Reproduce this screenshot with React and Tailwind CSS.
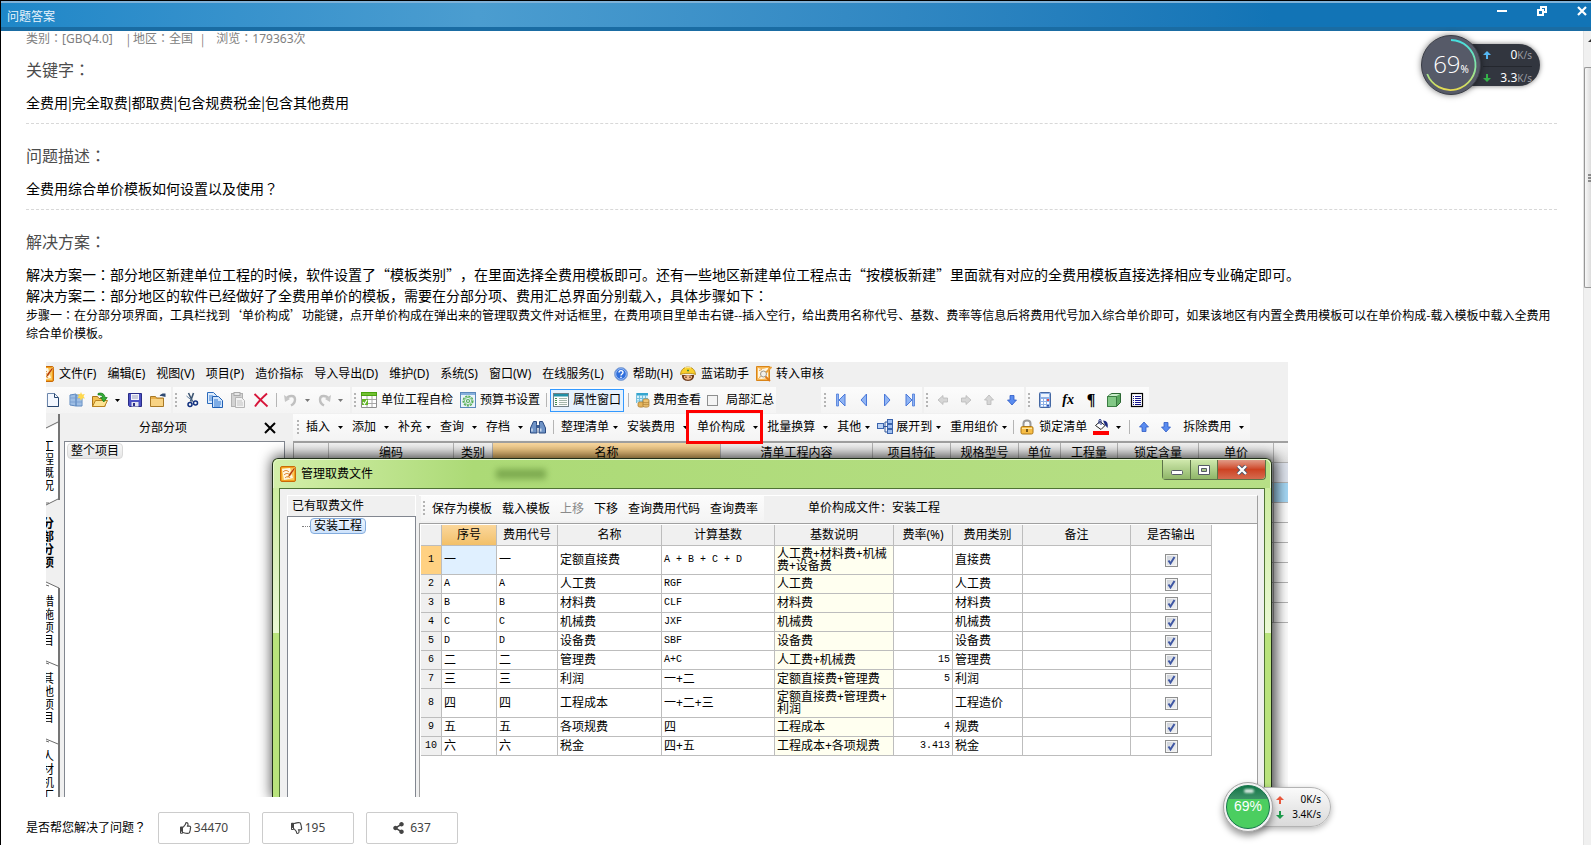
import React from "react";
import { FaRegThumbsUp, FaRegThumbsDown, FaShareAlt } from "react-icons/fa";

const menu = [
  "文件(F)",
  "编辑(E)",
  "视图(V)",
  "项目(P)",
  "造价指标",
  "导入导出(D)",
  "维护(D)",
  "系统(S)",
  "窗口(W)",
  "在线服务(L)",
];

const gridColumns = [
  { name: "", width: "w-[35px]" },
  { name: "编码", width: "w-[125px]" },
  { name: "类别", width: "w-[39px]" },
  { name: "名称", width: "w-[228px]", active: true },
  { name: "清单工程内容", width: "w-[152px]" },
  { name: "项目特征", width: "w-[78px]" },
  { name: "规格型号", width: "w-[68px]" },
  { name: "单位", width: "w-[42px]" },
  { name: "工程量", width: "w-[57px]" },
  { name: "锁定含量", width: "w-[81px]" },
  { name: "单价", width: "w-[75px]" },
  { name: "", width: "w-[15px]" },
];

const gridRows = ["bg-[#dfe4ee]", "bg-[#a6d8f6]", "bg-white", "bg-white", "bg-white", "bg-white", "bg-white", "bg-white"];

const feeColumns = [
  { name: "", width: "w-[21px]" },
  { name: "序号", width: "w-[55px]" },
  { name: "费用代号", width: "w-[61px]" },
  { name: "名称", width: "w-[104px]" },
  { name: "计算基数", width: "w-[113px]" },
  { name: "基数说明", width: "w-[119px]" },
  { name: "费率(%)", width: "w-[59px]" },
  { name: "费用类别", width: "w-[70px]" },
  { name: "备注", width: "w-[108px]" },
  { name: "是否输出", width: "w-[81px]" },
];

const fees = [
  { no: "一", name: "定额直接费", base: "A + B + C + D", note: "人工费+材料费+机械费+设备费", rate: "", type: "直接费", tall: true },
  { no: "A", name: "人工费", base: "RGF", note: "人工费", rate: "", type: "人工费" },
  { no: "B", name: "材料费", base: "CLF", note: "材料费", rate: "", type: "材料费" },
  { no: "C", name: "机械费", base: "JXF", note: "机械费", rate: "", type: "机械费" },
  { no: "D", name: "设备费", base: "SBF", note: "设备费", rate: "", type: "设备费" },
  { no: "二", name: "管理费", base: "A+C", note: "人工费+机械费", rate: "15", type: "管理费" },
  { no: "三", name: "利润", base: "一+二", note: "定额直接费+管理费", rate: "5", type: "利润" },
  { no: "四", name: "工程成本", base: "一+二+三", note: "定额直接费+管理费+利润", rate: "", type: "工程造价", tall: true },
  { no: "五", name: "各项规费", base: "四", note: "工程成本", rate: "4", type: "规费" },
  { no: "六", name: "税金", base: "四+五", note: "工程成本+各项规费", rate: "3.413", type: "税金" },
];

const sideTabs = [
  { name: "工程概况", height: "h-[89px] pt-[26px]" },
  { name: "分部分项", height: "h-[82px] pt-[14px] font-bold" },
  { name: "措施项目", height: "h-[78px] pt-[10px]" },
  { name: "其他项目", height: "h-[78px] pt-[9px]" },
  { name: "人材机汇", height: "h-[78px] pt-[9px]" },
];

const Svg = ({ className = "w-4 h-4", box = "0 0 16 16", children }) => (
  <svg className={`shrink-0 ${className}`} viewBox={box} fill="none" aria-hidden="true">
    {children}
  </svg>
);

// colon and question mark centred in their full-width box
const Mark = ({ children }) => (
  <span lang="ja" className="font-['Noto_Sans_CJK_JP',sans-serif] leading-none">
    {children}
  </span>
);

/* ---------- toolbar icons ---------- */

const AppIcon = ({ className }) => (
  <Svg className={className}>
    <rect x="0.5" y="0.5" width="15" height="15" rx="1.5" fill="#f2a01e" stroke="#c96a08" />
    <path d="M2 2h12v12H2z" fill="#f9c65a" />
    <path d="M2 3l8-1 3 10-9 2z" fill="#fff6e2" />
    <path d="M3 6c2-2 4-2 6 0M4 9c2-2 4-2 6 0M5 12c2-2 4-2 5 0" stroke="#d8791c" />
    <path d="M14.500 1L9 8l-1.500 4 3-2.500L15 3z" fill="#b3320c" stroke="#fbd46a" strokeWidth="0.6" />
  </Svg>
);

const NewIcon = () => (
  <Svg>
    <path d="M1.500 1.500h7l4 4v9h-11z" fill="#f4f8ff" stroke="#6c87ad" />
    <path d="M8.500 1.500v4h4M12.500 6v8.500h-11" stroke="#28466f" />
  </Svg>
);

const NewProjectIcon = () => (
  <Svg>
    <path d="M1 3l6-1v12l-6-1zM7 3h6v11H7z" fill="#b9d4f1" stroke="#5d88bf" />
    <path d="M3 3v10M5 3v10M9 4v10M11 4v10M1 6h12M1 10h12" stroke="#6e97cb" strokeWidth="0.7" />
    <path d="M12 0l1 2.500L15.800 2 14.500 4.200 16 6.500l-2.600-.2L12 8.500l-1-2.300-2.500.1L9.800 4 8.500 2l2.500.4z" fill="#ffd84c" />
  </Svg>
);

const OpenIcon = () => (
  <Svg>
    <path d="M.5 14.500v-10h5l1.500 2h6v8z" fill="#f3c04f" stroke="#a9751a" />
    <path d="M.5 14.500l3-6h12l-3 6z" fill="#fde391" stroke="#b98220" />
    <path d="M6 1.500c4-1.500 7 1 7 4h2.200L11.800 10 8.500 5.500h2C10.500 4 9 2.500 6 3z" fill="#33ad35" stroke="#147418" strokeWidth="0.7" />
  </Svg>
);

const SaveIcon = () => (
  <Svg>
    <path d="M1.500 1.500h13v13h-12l-1-1z" fill="#4b50c4" stroke="#2a2d86" />
    <path d="M4 2h8v6H4z" fill="#f3f4fb" />
    <path d="M5 4h6M5 6h6" stroke="#9da0bd" />
    <path d="M4.500 10h7v4.500h-7z" fill="#e4e4ef" />
    <path d="M6 11h2v3H6z" fill="#2a2d86" />
  </Svg>
);

const FolderIcon = () => (
  <Svg>
    <path d="M.5 14.500v-10h5l1 1.500h7v8.500z" fill="#e9b04a" stroke="#a87926" />
    <path d="M1 7h12v7H1z" fill="#f8d384" />
    <path d="M9.500 3.500l3-2h3V5z" fill="#2f4a73" />
    <path d="M10 3.500l4-1" stroke="#2f4a73" />
  </Svg>
);

const CutIcon = () => (
  <Svg>
    <path d="M4.500 1l4 8.500M9.500 1l-3 8.500" stroke="#3d5572" strokeWidth="1.600" />
    <path d="M2.500 4l6 5" stroke="#64809f" />
    <circle cx="6" cy="12.500" r="2" stroke="#102f7e" strokeWidth="1.500" />
    <circle cx="11.500" cy="11" r="2" stroke="#102f7e" strokeWidth="1.500" />
  </Svg>
);

const CopyIcon = () => (
  <Svg>
    <path d="M.5.5h6l3 3v8h-9z" fill="#dcebfc" stroke="#2d6cbd" />
    <path d="M2 4h4M2 6h5M2 8h5" stroke="#3f82d4" />
    <path d="M5.500 4.500h6l4 4v7h-10z" fill="#cfe4fc" stroke="#1f5fb4" />
    <path d="M7 8h4M7 10h7M7 12h7M7 14h6" stroke="#2f76cf" />
  </Svg>
);

const PasteIcon = () => (
  <Svg>
    <rect x="1.500" y="1.500" width="11" height="13" fill="#d3d3d3" stroke="#b1b1b1" />
    <rect x="4" y="0.500" width="6" height="3" fill="#e6e6e6" stroke="#a9a9a9" />
    <path d="M5.500 5.500h6l3 3v7h-9z" fill="#f2f2f2" stroke="#b5b5b5" />
    <path d="M7 9h5M7 11h6M7 13h6" stroke="#c3c3c3" />
  </Svg>
);

const DeleteIcon = () => (
  <Svg>
    <path d="M1.500 2c3 3 8 8 13 12.500M14 1.500C9 6 5 10 2 14.500" stroke="#d7153a" strokeWidth="1.900" />
  </Svg>
);

const UndoIcon = ({ className = "" }) => (
  <Svg className={`w-3.5 h-3.5 ${className}`} box="0 0 14 14">
    <path d="M2 6c3-4 9-4 9 .5 0 3-2 5-4 6" stroke="#c0c0c0" strokeWidth="2.400" />
    <path d="M0 2l1 7 5-3z" fill="#c6c6c6" />
  </Svg>
);

const CheckSheetIcon = () => (
  <Svg>
    <path d="M.5.500h15v15H.5z" fill="#fff" stroke="#8e8e8e" />
    <path d="M0 0h16v4H0z" fill="#4aa30f" />
    <path d="M1 2h14" stroke="#9bdc5a" />
    <path d="M1 7.500h14M1 11.500h14M6 4v11M11 4v11" stroke="#a8a8a8" />
    <path d="M1 7h6v6H1z" fill="#64b52a" />
    <path d="M2 10l1.500 2L6 8" stroke="#fff" strokeWidth="1.200" />
  </Svg>
);

const GearSheetIcon = () => (
  <Svg>
    <rect x="0.500" y="0.500" width="15" height="15" fill="#eaf3fb" stroke="#5b89bb" />
    <path d="M1 1h14v2H1z" fill="#86b0dc" />
    <circle cx="8" cy="9" r="4.800" stroke="#58ae58" strokeWidth="1.500" strokeDasharray="2.200 1" />
    <circle cx="8" cy="9" r="3.600" stroke="#7cc47c" strokeWidth="1" />
    <circle cx="8" cy="9" r="1.500" stroke="#58ae58" strokeWidth="1.200" />
  </Svg>
);

const PropertyIcon = () => (
  <Svg>
    <rect x="0.500" y="1.500" width="15" height="13" fill="#fbfdfb" stroke="#6f7f86" />
    <path d="M1 2h14v2.500H1z" fill="#1f8fa6" />
    <path d="M2 6.500h2M2 8.500h2M2 10.500h2M2 12.500h2" stroke="#3f8b4d" />
    <path d="M6 6.500h8M6 8.500h8M6 10.500h8M6 12.500h8" stroke="#a3b5aa" />
  </Svg>
);

const CostViewIcon = () => (
  <Svg>
    <path d="M1 1h12v10H1z" fill="#d6effa" />
    <path d="M1 1h12v2.500H1z" fill="#36a6cf" />
    <path d="M1.500 1v10M4.500 3v8M7.500 3v8M10.500 3v8M1 6.500h12M1 9h12" stroke="#74c0dd" />
    <path d="M3 11c0-1.500 6-1.500 6 0v3c0 1.500-6 1.500-6 0z" fill="#e4b45c" stroke="#a5762a" strokeWidth="0.700" />
    <path d="M8 8c0-1.500 6-1.500 6 0v6c0 1.500-6 1.500-6 0z" fill="#edc373" stroke="#a5762a" strokeWidth="0.700" />
    <path d="M8 10c1 1 5 1 6 0M8 12c1 1 5 1 6 0" stroke="#a5762a" strokeWidth="0.700" />
  </Svg>
);

const NavIcon = ({ dir, end }) => (
  <Svg className={dir === "left" ? "w-4 h-4" : "w-4 h-4 rotate-180"}>
    <path d={end ? "M12 2v12L6 8z" : "M10.500 2v12L5 8z"} fill="#8fb4f4" stroke="#4a78d8" />
    {end && <path d="M3.500 2v12h2V2z" fill="#8fb4f4" stroke="#4a78d8" strokeWidth="0.800" />}
  </Svg>
);

const ArrowIcon = ({ turn = "", blue }) => (
  <Svg className={`w-4 h-4 ${turn}`}>
    <path
      d="M8 3l4.500 5H10v4.500H6V8H3.500z"
      fill={blue ? "#5a8cf0" : "#d6d6d6"}
      stroke={blue ? "#2f5bc4" : "#b9b9b9"}
      strokeWidth="0.800"
    />
  </Svg>
);

const CalculatorIcon = () => (
  <Svg>
    <rect x="2.500" y="0.500" width="11" height="15" rx="1" fill="#8fb1e6" stroke="#4568a3" />
    <path d="M4 2h8v3H4z" fill="#eef5fd" />
    <path d="M4 7h2v2H4zM7 7h2v2H7zM4 10h2v2H4zM7 10h2v2H7zM10 10h2v2h-2zM4 13h2v1.500H4zM7 13h2v1.500H7z" fill="#fff" />
    <path d="M10 7h2v2h-2z" fill="#e04848" />
    <path d="M10 13h2v1.500h-2z" fill="#2c4fae" />
  </Svg>
);

const CubeIcon = () => (
  <Svg>
    <path d="M1.500 4.500l4-3h9v9l-4 4h-9z" fill="#5aa85f" stroke="#2c6733" />
    <path d="M1.500 4.500h9v10h-9z" fill="#82c886" stroke="#3b7d42" />
    <path d="M2 4l4-2h8l-3.500 2z" fill="#c9ecca" />
  </Svg>
);

const ListIcon = () => (
  <Svg>
    <rect x="2.500" y="1.500" width="11" height="13" fill="#fff" stroke="#000" strokeWidth="1.200" />
    <path d="M4 4.500h1M4 6.500h1M4 8.500h1M4 10.500h1M4 12.500h1M6 4.500h6M6 6.500h6M6 8.500h6M6 10.500h6M6 12.500h6" stroke="#16168c" />
  </Svg>
);

const HelpIcon = () => (
  <Svg className="w-3.5 h-3.5 ml-[10px]" box="0 0 14 14">
    <circle cx="7" cy="7" r="6.500" fill="#2f6fdc" stroke="#8fa9d3" />
    <circle cx="7" cy="7" r="5.300" stroke="#cfe0fa" strokeWidth="0.700" />
    <path d="M5 5.500c0-2.500 4-2.500 4 0C9 7 7 7 7 8.500M7 9.800v1.300" stroke="#fff" strokeWidth="1.400" />
  </Svg>
);

const HelmetIcon = () => (
  <Svg className="w-4 h-4 ml-[7px]">
    <path d="M2 9h12c1 8-13 8-12 0z" fill="#6b3717" />
    <path d="M4 10c2-1 6-1 8 0 1 5-9 5-8 0z" fill="#f3bb8c" />
    <path d="M.5 8.500C1-1.500 15-1.500 15.500 8.500c-3-1.500-12-1.500-15 0z" fill="#f9cf2c" stroke="#a77a0b" strokeWidth="0.700" />
    <path d="M5 2c2-1 4-1 6 0" stroke="#fff1a4" />
    <path d="M7 4.500h2" stroke="#3f8b3a" strokeWidth="1.500" />
    <path d="M6 10.500V12M10 10.500V12" stroke="#331505" />
  </Svg>
);

const AuditIcon = () => (
  <Svg className="w-4 h-4 ml-[7px]">
    <path d="M.5.500h13v14H.5z" fill="#f7b552" stroke="#d98519" />
    <path d="M2 2c4 2 6 0 10 0v10c-4 0-6 2-10 0z" fill="#fff6e2" />
    <circle cx="7.500" cy="8" r="3" fill="#f2f0ea" stroke="#9a9488" />
    <path d="M9.500 10.500L14 15" stroke="#e07a17" strokeWidth="1.800" />
    <path d="M15.500 1L10 6.500" stroke="#e9a03a" strokeWidth="1.800" />
    <path d="M3 4.500l3-1M3 11.500l2-1" stroke="#e0a04c" />
  </Svg>
);

const BinocularsIcon = () => (
  <Svg>
    <path d="M3.500 2.500h3v3l.5 8.500H.5V9zM9.500 2.500h3l3 6.500v5H9l.5-8.500z" fill="#6f93c6" stroke="#2b4a80" />
    <path d="M6.500 6h3v3h-3z" fill="#3b5c93" />
    <path d="M2 9.500v3M10.800 9.500v3" stroke="#e3edf9" strokeWidth="1.200" />
  </Svg>
);

const ExpandIcon = () => (
  <Svg>
    <path d="M6 7.500h4M8 3v10M8 3h2M8 13h2" stroke="#31569b" />
    <rect x="0.500" y="4.500" width="6" height="5" fill="#bcd3f5" stroke="#3b64ad" />
    <rect x="10.500" y="0.500" width="5" height="4" fill="#9fbff0" stroke="#3b64ad" />
    <rect x="10.500" y="5.500" width="5" height="4" fill="#9fbff0" stroke="#3b64ad" />
    <rect x="10.500" y="10.500" width="5" height="4" fill="#9fbff0" stroke="#3b64ad" />
  </Svg>
);

const LockIcon = () => (
  <Svg className="w-3.5 h-4" box="0 0 14 16">
    <path d="M3.500 8V4.500c0-4 7-4 7 0V8" stroke="#9a9a9a" strokeWidth="2" />
    <rect x="1" y="7.500" width="12" height="7.500" rx="1.500" fill="#f7bd45" stroke="#ac7716" />
    <path d="M2 9.500h10" stroke="#ffe6a2" />
    <path d="M7 10v3" stroke="#5c3e09" strokeWidth="1.600" />
  </Svg>
);

const BucketIcon = () => (
  <Svg>
    <path d="M2.500 6.500L7 2.500l5 4L8 10.500z" fill="#fff" stroke="#222" />
    <path d="M6 5V1.500c0-1.500 2-1.500 2 0V6" stroke="#1d2b80" />
    <path d="M10 1.500c4 0 5.500 3 4.500 7.500L12 6z" fill="#1d2b80" />
    <path d="M0 12h16v4H0z" fill="#f00" />
  </Svg>
);

const Caret = ({ className = "", color = "#000" }) => (
  <Svg className={`w-[5px] h-[3px] ${className}`} box="0 0 5 3">
    <path d="M0 0h5L2.500 3z" fill={color} />
  </Svg>
);

const Grip = () => (
  <Svg className="w-0.5 h-[15px]" box="0 0 2 15">
    <path d="M1 0v15" stroke="#b4b4b4" strokeWidth="2" strokeDasharray="2 2" />
  </Svg>
);

const Divider = ({ className = "" }) => <span className={`w-px h-3.5 shrink-0 bg-[#b5b5b5] ${className}`} />;

const IconButton = ({ label, className = "", children }) => (
  <button type="button" aria-label={label} className={`flex shrink-0 items-center justify-center ${className}`}>
    {children}
  </button>
);

const Drop = ({ label, near }) => (
  <button type="button" className="flex items-center shrink-0">
    {label}
    <Caret className={near ? "ml-1" : "ml-2"} />
  </button>
);

const bar = "flex items-center shrink-0 h-[26px] bg-linear-to-b from-[#fcfcfc] to-[#f4f4f4]";

/* ---------- page parts ---------- */

const TitleBar = () => (
  <header className="flex items-start justify-between h-[30px] border-t-2 border-t-[#7fb2d8] border-b-4 border-b-[#1a6ca3] bg-linear-to-r from-[#1e87c8] via-[#4b9dd0] via-30% to-[#1274b6] to-80% text-[#e8f4fc]">
    <h1 className="pl-1.5 pt-[5px] text-[12px] leading-[18px]">问题答案</h1>
    <div className="flex gap-[30px] pt-[3px] pr-1 text-white">
      <IconButton label="最小化">
        <Svg className="w-2.5 h-2.5" box="0 0 10 10">
          <path d="M0 5h10" stroke="#fff" strokeWidth="2" />
        </Svg>
      </IconButton>
      <IconButton label="还原">
        <Svg className="w-2.5 h-2.5" box="0 0 10 10">
          <path d="M4 3V1h5v5H7M1 4h5v5H1z" stroke="#fff" strokeWidth="2" />
        </Svg>
      </IconButton>
      <IconButton label="关闭">
        <Svg className="w-2.5 h-2.5" box="0 0 10 10">
          <path d="M1 1l8 8M9 1L1 9" stroke="#fff" strokeWidth="2.200" />
        </Svg>
      </IconButton>
    </div>
  </header>
);

const MenuRow = () => (
  <nav className="flex items-center h-[25px] pb-0.5 shrink-0">
    <div className="w-2 h-4 overflow-hidden flex justify-end">
      <AppIcon className="w-4 h-4" />
    </div>
    <ul className="flex gap-[11px] ml-[5px]">
      {menu.map((name) => (
        <li key={name}>
          <button type="button">{name}</button>
        </li>
      ))}
    </ul>
    <HelpIcon />
    <button type="button" className="ml-[5px]">帮助(H)</button>
    <HelmetIcon />
    <button type="button" className="ml-[5px]">蓝诺助手</button>
    <AuditIcon />
    <button type="button" className="ml-1">转入审核</button>
  </nav>
);

const MainToolbar = () => (
  <div className="flex h-[27px] shrink-0">
    <div className={`${bar} gap-[7px] pr-[5px]`}>
      <IconButton label="新建"><NewIcon /></IconButton>
      <IconButton label="新建项目"><NewProjectIcon /></IconButton>
      <IconButton label="打开"><OpenIcon /></IconButton>
      <Caret />
      <IconButton label="保存"><SaveIcon /></IconButton>
      <IconButton label="目录"><FolderIcon /></IconButton>
    </div>
    <div className={`${bar} gap-[7px] ml-0.5 pl-0.5 pr-[7px]`}>
      <Grip />
      <IconButton label="剪切"><CutIcon /></IconButton>
      <IconButton label="复制"><CopyIcon /></IconButton>
      <IconButton label="粘贴"><PasteIcon /></IconButton>
      <IconButton label="删除"><DeleteIcon /></IconButton>
      <Divider />
      <IconButton label="撤销"><UndoIcon /></IconButton>
      <Caret color="#777" />
      <IconButton label="恢复"><UndoIcon className="-scale-x-100" /></IconButton>
      <Caret color="#777" />
    </div>
    <div className={`${bar} ml-0.5 pl-0.5 pr-0.5`}>
      <Grip />
      <button type="button" className="flex items-center gap-1 ml-[5px]">
        <CheckSheetIcon />
        单位工程自检
      </button>
      <button type="button" className="flex items-center gap-1 ml-[7px]">
        <GearSheetIcon />
        预算书设置
      </button>
      <Divider className="ml-1.5" />
      <button type="button" className="flex items-center gap-1 h-[23px] ml-[3px] px-0.5 border border-[#3399ff] bg-[#e6f1fc]">
        <PropertyIcon />
        属性窗口
      </button>
      <Divider className="ml-1" />
      <button type="button" className="flex items-center gap-0.5 ml-1.5">
        <CostViewIcon />
        费用查看
      </button>
      <label className="flex items-center gap-2 ml-1.5">
        <input type="checkbox" className="appearance-none w-[11px] h-[11px] border border-[#8e8f8f] bg-[#f4f4f4]" />
        局部汇总
      </label>
    </div>
    <div className={`${bar} gap-[7px] ml-[45px] pl-[3px] pr-1`}>
      <Grip />
      <IconButton label="首条"><NavIcon dir="left" end /></IconButton>
      <IconButton label="上一条"><NavIcon dir="left" /></IconButton>
      <IconButton label="下一条"><NavIcon dir="right" /></IconButton>
      <IconButton label="末条"><NavIcon dir="right" end /></IconButton>
    </div>
    <div className={`${bar} gap-[7px] ml-0.5 pl-0.5 pr-1`}>
      <Grip />
      <IconButton label="左移"><ArrowIcon turn="-rotate-90" /></IconButton>
      <IconButton label="右移"><ArrowIcon turn="rotate-90" /></IconButton>
      <IconButton label="升级"><ArrowIcon /></IconButton>
      <IconButton label="降级"><ArrowIcon turn="rotate-180" blue /></IconButton>
    </div>
    <div className={`${bar} gap-[7px] ml-0.5 pl-0.5 pr-1`}>
      <Grip />
      <IconButton label="计算器"><CalculatorIcon /></IconButton>
      <button type="button" className="w-4 font-['Liberation_Serif',serif] italic font-bold text-[14px] leading-4">fx</button>
      <button type="button" className="w-4 font-['Liberation_Serif',serif] font-bold text-[16px] leading-4">¶</button>
      <IconButton label="图形"><CubeIcon /></IconButton>
      <IconButton label="列表"><ListIcon /></IconButton>
    </div>
  </div>
);

const ListToolbar = () => (
  <div className="h-[27px] shrink-0 flex">
    <div className={`${bar} gap-[9px] pl-1 pr-1.5`}>
      <div className="flex items-center gap-[7px]">
        <Grip />
        <Drop label="插入" />
      </div>
      <Drop label="添加" />
      <Drop label="补充" near />
      <Drop label="查询" />
      <div className="flex items-center gap-[7px]">
        <Drop label="存档" />
        <IconButton label="查找"><BinocularsIcon /></IconButton>
        <Divider />
        <Drop label="整理清单" near />
      </div>
      <Drop label="安装费用" />
      {/* the highlighted command */}
      <div className="relative flex">
        <Drop label="单价构成" />
        <span className="absolute -left-[11px] -top-[9px] w-[77px] h-[34px] border-[3px] border-[#ff0000]" />
      </div>
      <Drop label="批量换算" />
      <div className="flex items-center gap-[7px]">
        <Drop label="其他" near />
        <div className="flex items-center gap-[3px]">
          <ExpandIcon />
          <Drop label="展开到" near />
        </div>
      </div>
      <div className="flex items-center gap-1.5">
        <Drop label="重用组价" near />
        <Divider />
        <button type="button" className="flex items-center gap-[5px]">
          <LockIcon />
          锁定清单
        </button>
        <button type="button" aria-label="填充颜色" className="flex items-center gap-[7px]">
          <BucketIcon />
          <Caret />
        </button>
        <Divider className="ml-0.5" />
      </div>
      <div className="flex items-center gap-1.5 -ml-[3px]">
        <IconButton label="上移"><ArrowIcon blue /></IconButton>
        <IconButton label="下移"><ArrowIcon turn="rotate-180" blue /></IconButton>
      </div>
      <Drop label="拆除费用" />
    </div>
  </div>
);

const SideTabs = () => (
  <div className="relative w-[14px] shrink-0 overflow-hidden bg-white">
    <svg className="absolute inset-0" width="14" height="383" viewBox="0 0 14 383" fill="none" aria-hidden="true">
      <path d="M0 0h13v9L0 15z" fill="#f0f0f0" />
      <path d="M0 91l13-6h1v89h-1L0 168z" fill="#f0f0f0" />
      <path d="M0 14l12-6M0 91l12-6M0 168l13 6M0 171l3 1M0 247l12 5M0 249l3 1M0 325l12 5M0 327l3 1M0 89l3 0" stroke="#6b6b6b" />
      <path d="M13 0v86M13 174v209" stroke="#757575" strokeWidth="2" />
    </svg>
    <div className="relative flex flex-col h-0 whitespace-normal">
      {sideTabs.map((tab) => (
        <button
          type="button"
          key={tab.name}
          className={`flex shrink-0 items-start w-3 -ml-1 text-left leading-[13px] break-all ${tab.height}`}
        >
          {tab.name}
        </button>
      ))}
    </div>
  </div>
);

const ListGrid = () => (
  <table className="w-full table-fixed border-separate border-spacing-0 border-l border-t-2 border-[#a0a0a0] leading-4">
    <thead>
      <tr className="h-5">
        {gridColumns.map((col, i) => (
          <th
            key={i}
            className={`p-0 font-normal border-r border-b border-[#b4b4b4] ${col.width} ${
              col.active ? "bg-linear-to-b from-[#fbd9a0] to-[#eeb95c]" : "bg-linear-to-b from-[#f4f4f4] to-[#e2e2e2]"
            }`}
          >
            {col.name}
          </th>
        ))}
      </tr>
    </thead>
    <tbody>
      {gridRows.map((color, i) => (
        <tr key={i} className={`h-5 ${color}`}>
          {gridColumns.map((col, j) => (
            <td key={j} className="p-0 border-r border-b border-[#b4b4b4]" />
          ))}
        </tr>
      ))}
    </tbody>
  </table>
);

const code = (text) => (/^[\x20-\x7e]+$/.test(text) ? "font-['Liberation_Mono',monospace] text-[10px]" : "");

// lets a long formula wrap after a plus sign
const wrapAtPlus = (text) => text.replaceAll("+", "+\u200b");

const FeeTable = () => {
  const cell = "p-0 pl-0.5 border-r border-b border-[#bdbdbd]";
  return (
    <table className="w-[791px] table-fixed border-separate border-spacing-0 bg-white leading-3">
      <thead>
        <tr className="h-[21px]">
          {feeColumns.map((col) => (
            <th
              key={col.name}
              className={`p-0 font-normal border-r border-b border-[#bdbdbd] ${col.width} ${
                col.name === "序号" ? "bg-linear-to-b from-[#fbd79b] to-[#f2c069]" : "bg-[#f0f0f0]"
              }`}
            >
              {col.name}
            </th>
          ))}
        </tr>
      </thead>
      <tbody>
        {fees.map((fee, i) => (
          <tr key={fee.no} className={fee.tall ? "h-[29px]" : "h-[19px]"}>
            <td
              className={`p-0 text-center border-r border-b border-[#bdbdbd] font-['Liberation_Mono',monospace] text-[10px] ${
                i === 0 ? "bg-[#ffd182]" : "bg-[#f0f0f0]"
              }`}
            >
              {i + 1}
            </td>
            <td className={`${cell} ${code(fee.no)} ${i === 0 ? "bg-[#e0f0ff]" : ""}`}>{fee.no}</td>
            <td className={`${cell} ${code(fee.no)}`}>{fee.no}</td>
            <td className={cell}>{fee.name}</td>
            <td className={`${cell} ${code(fee.base)}`}>{fee.base}</td>
            <td className={`${cell} bg-[#fffff0] whitespace-normal break-all`}>{wrapAtPlus(fee.note)}</td>
            <td className={`${cell} pr-0.5 text-right font-['Liberation_Mono',monospace] text-[10px]`}>{fee.rate}</td>
            <td className={cell}>{fee.type}</td>
            <td className={cell} />
            <td className="p-0 border-r border-b border-[#bdbdbd]">
              <label className="relative block w-[13px] h-[13px] mx-auto">
                <input
                  type="checkbox"
                  defaultChecked
                  aria-label={fee.name}
                  className="peer block appearance-none w-[13px] h-[13px] border border-[#8e8f8f] bg-linear-to-br from-[#c9ced6] to-[#f6f6f6] shadow-[inset_0_0_0_1px_#f4f4f4]"
                />
                <svg className="absolute inset-0 invisible peer-checked:visible" viewBox="0 0 13 13" fill="none" aria-hidden="true">
                  <path d="M3.500 6.500L5.500 9.500 9.500 3" stroke="#3f57a3" strokeWidth="2" />
                </svg>
              </label>
            </td>
          </tr>
        ))}
      </tbody>
    </table>
  );
};

const FeeDialog = () => (
  <section
    aria-label="管理取费文件"
    className="absolute left-[226px] top-24 bottom-0 w-[1000px] flex flex-col rounded-t-md border border-b-0 border-[#22301a] bg-linear-to-b from-[#b2de7c] from-0% via-[#a5dc80] via-10% to-[#b9e37c] to-20% shadow-[2px_0_14px_2px_rgba(0,0,0,0.75)]"
  >
    <div className="flex items-start justify-between h-[29px] shrink-0 pl-1.5 pr-1 rounded-t-md border-t border-x border-[#e6f6cf] bg-linear-to-r from-[#d3efa9] from-0% via-[#acda76] via-20% to-[#b7df86]">
      <div className="flex items-center gap-[5px] h-[27px]">
        <AppIcon className="w-4 h-4" />
        <h2>管理取费文件</h2>
        <span aria-hidden="true" className="ml-[118px] w-[50px] h-2.5 bg-[#5d8a35] opacity-60 blur-[3px]" />
      </div>
      <div className="flex h-5 rounded-b border border-t-0 border-[#5c7348]">
        <IconButton label="最小化" className="w-7 bg-linear-to-b from-[#cfe8ac] to-[#8fb668] border-r border-[#5c7348]">
          <Svg className="w-3 h-3" box="0 0 12 12">
            <rect x="0.500" y="6.500" width="11" height="4" rx="1" fill="#fff" stroke="#555b66" />
          </Svg>
        </IconButton>
        <IconButton label="最大化" className="w-[27px] bg-linear-to-b from-[#cfe8ac] to-[#8fb668] border-r border-[#5c7348]">
          <Svg className="w-3 h-2.5" box="0 0 12 10">
            <path d="M.5.500h11v9H.5z" fill="#fff" stroke="#555b66" />
            <path d="M3.500 3.500h5v3h-5z" fill="#a9c98a" stroke="#555b66" />
          </Svg>
        </IconButton>
        <IconButton label="关闭" className="w-[47px] rounded-br bg-linear-to-b from-[#e09a86] via-[#cd4222] via-50% to-[#d56a4e]">
          <Svg className="w-3 h-2.5" box="0 0 12 10">
            <path d="M2 1l8 8M10 1L2 9" stroke="#4a5266" strokeWidth="4" />
            <path d="M2 1l8 8M10 1L2 9" stroke="#fff" strokeWidth="2.400" />
          </Svg>
        </IconButton>
      </div>
    </div>
    <div className="relative flex-1 flex min-h-0">
      <div aria-hidden="true" className="absolute left-0 right-0 top-0 h-[145px] bg-linear-to-b from-[#cdeca0] to-[#eaf8d4]" />
      <div className="relative flex-1 flex gap-[3px] mx-1.5 pl-[7px] pr-1.5 pt-1.5 border border-b-0 border-[#4f7434] bg-[#f0f0f0]">
        <div className="w-[129px] shrink-0 flex flex-col">
          <h3 className="h-[21px] pl-1 leading-5 border border-b-0 border-white">已有取费文件</h3>
          <div className="flex-1 flex items-start pt-px pl-3.5 border border-b-0 border-[#828790] bg-white">
            <span className="w-2 mt-2 border-t border-dotted border-[#808080]" />
            <button type="button" className="h-4 px-[3px] leading-[14px] rounded-sm border border-[#84acdd] bg-linear-to-b from-[#eef5fe] to-[#cde2fb]">
              安装工程
            </button>
          </div>
        </div>
        <div className="flex-1 flex flex-col border-t border-t-white border-r border-r-[#a0a0a0]">
          <div className="flex h-[27px] shrink-0">
            <div className="flex items-center h-[25px] gap-[10px] ml-0.5 pl-0.5 pr-1.5 bg-linear-to-b from-[#fcfcfc] to-[#f4f4f4]">
              <div className="flex items-center gap-[7px]">
                <Grip />
                <button type="button">保存为模板</button>
              </div>
              <button type="button">载入模板</button>
              <button type="button" disabled className="text-[#8a8a8a]">上移</button>
              <button type="button">下移</button>
              <button type="button">查询费用代码</button>
              <button type="button">查询费率</button>
            </div>
            <p className="ml-11 leading-6">单价构成文件：安装工程</p>
          </div>
          <div className="flex-1 pl-px pt-px border-t border-l border-[#a0a0a0] bg-white">
            <FeeTable />
          </div>
        </div>
      </div>
    </div>
  </section>
);

const SoftwareWindow = () => (
  <figure className="relative flex flex-col w-[1242px] h-[435px] ml-5 mt-[19px] overflow-hidden whitespace-nowrap bg-[#f0f0f0] text-[12px] leading-4 text-black">
    <MenuRow />
    <MainToolbar />
    <div className="flex-1 flex min-h-0">
      <SideTabs />
      <div className="w-[221px] shrink-0 ml-1 flex flex-col">
        <div className="flex items-center h-[27px] shrink-0 pl-[75px] pr-[9px]">
          <h3 className="flex-1">分部分项</h3>
          <IconButton label="关闭面板">
            <Svg className="w-3 h-3" box="0 0 12 12">
              <path d="M1 1l10 10M11 1L1 11" stroke="#000" strokeWidth="2" />
            </Svg>
          </IconButton>
        </div>
        <div className="flex-1 flex items-start pt-px pl-0.5 border border-b-0 border-[#828790] bg-white">
          <button type="button" className="h-4 px-[3px] leading-[14px] rounded-sm border border-[#d9d9d9] bg-linear-to-b from-[#f8f8f8] to-[#e6e6e6]">
            整个项目
          </button>
        </div>
      </div>
      <div className="flex-1 min-w-0 ml-2 flex flex-col">
        <ListToolbar />
        <div className="flex-1 bg-white">
          <ListGrid />
        </div>
      </div>
    </div>
    <FeeDialog />
  </figure>
);

const Feedback = () => {
  const button =
    "flex items-center justify-center w-[92px] h-8 rounded-xs border border-[#cccccc] bg-white text-[#444]";
  return (
    <footer className="flex items-center gap-3 mt-[15px] text-[12px] leading-4">
      <p className="w-[120px] whitespace-nowrap">是否帮您解决了问题<Mark>？</Mark></p>
      <button type="button" className={`${button} gap-0.5`}>
        <FaRegThumbsUp />
        34470
      </button>
      <button type="button" className={`${button} gap-0.5`}>
        <FaRegThumbsDown />
        195
      </button>
      <button type="button" className={`${button} gap-1.5`}>
        <FaShareAlt className="w-[11px]" />
        637
      </button>
    </footer>
  );
};

const SpeedArrow = ({ color, down }) => (
  <Svg className={`w-2 h-2 ${down ? "rotate-180" : ""}`} box="0 0 8 8">
    <path d="M4 0l4 4H5v4H3V4H0z" fill={color} />
  </Svg>
);

const DarkSpeedBall = () => (
  <aside className="absolute top-[34px] right-[51px] flex items-center w-[119px] h-[60px]">
    <div className="absolute left-7 right-0 h-[42px] rounded-r-full bg-[#32363f] shadow-[0_0_5px_rgba(0,0,0,0.5)] pl-[34px] pr-2 text-[12px] leading-[21px] text-white">
      <p className="flex items-center border-b border-[#24272e]">
        <SpeedArrow color="#56b9f5" />
        <span className="flex-1 text-right">0<small className="text-[10px] text-[#9a9ca3]">K/s</small></span>
      </p>
      <p className="flex items-center">
        <SpeedArrow color="#35b24a" down />
        <span className="flex-1 text-right">3.3<small className="text-[10px] text-[#9a9ca3]">K/s</small></span>
      </p>
    </div>
    <div className="relative flex items-center justify-center w-[60px] h-[60px] pb-0.5 rounded-full border border-[#3a3d46] bg-[#565a68] shadow-[0_0_6px_rgba(0,0,0,0.5)] text-white">
      <svg className="absolute inset-0" viewBox="0 0 58 58" fill="none" aria-hidden="true">
        <defs>
          <linearGradient id="ring" x1="0" y1="0" x2="0" y2="1">
            <stop offset="0" stopColor="#45dfe0" />
            <stop offset="0.600" stopColor="#8fe69a" />
            <stop offset="1" stopColor="#e6da50" />
          </linearGradient>
        </defs>
        <path d="M29 4a25 25 0 1 1-23.800 34" stroke="url(#ring)" strokeWidth="1.800" />
      </svg>
      <strong className="font-['Open_Sans',sans-serif] font-light text-[24px] leading-6">69</strong>
      <span className="mt-2.5 text-[10px] leading-3">%</span>
    </div>
  </aside>
);

const GreenSpeedBall = () => (
  <aside className="absolute bottom-[13px] right-[260px] flex items-center w-[108px] h-[50px]">
    <div className="absolute left-6 right-0 h-10 py-1 pl-7 pr-[9px] rounded-r-full border border-[#b3b3b3] bg-linear-to-b from-[#fafafa] to-[#dadada] shadow-[0_2px_6px_rgba(0,0,0,0.3)] text-[10px] leading-[15px] text-black">
      <p className="flex items-center">
        <SpeedArrow color="#e8573c" />
        <span className="flex-1 text-right">0K/s</span>
      </p>
      <p className="flex items-center">
        <SpeedArrow color="#1f9a4c" down />
        <span className="flex-1 text-right">3.4K/s</span>
      </p>
    </div>
    <div className="relative flex items-center justify-center w-[50px] h-[50px] rounded-full border border-[#a5a5a5] bg-[#f2f2f2] shadow-[0_4px_7px_rgba(0,0,0,0.4)]">
      <div className="flex items-center justify-center w-11 h-11 pb-0.5 rounded-full border border-[#13754a] bg-linear-to-b from-[#0f7547] from-0% via-[#3b9167] via-30% to-[#4bce60] to-30% text-[14px] text-white font-['Liberation_Sans',sans-serif]">
        69%
      </div>
      <span aria-hidden="true" className="absolute left-5 top-1.5 w-2.5 h-1 rounded-full bg-white opacity-80 blur-[1px]" />
    </div>
  </aside>
);

const Scrollbar = () => (
  <div aria-hidden="true" className="w-2 shrink-0 flex flex-col overflow-hidden border-l border-[#e3e3e3] bg-[#f0f0f0]">
    <Svg className="w-2 h-2 ml-1 mt-1" box="0 0 8 8">
      <path d="M0 7l4-4 4 4z" fill="#333" />
    </Svg>
    <div className="h-[221px] mt-6 pl-[3px] flex items-center rounded-l-xs border border-r-0 border-[#979797] bg-linear-to-r from-[#f8f8f8] to-[#dcdcdc]">
      <Svg className="w-1 h-2" box="0 0 4 8">
        <path d="M0 1h4M0 4h4M0 7h4" stroke="#333" />
      </Svg>
    </div>
  </div>
);

const heading = "h-6 text-[16px] leading-6 text-[#4c4c4c]";
const cjk = "font-['Noto_Sans_CJK_SC',sans-serif] [text-spacing-trim:space-all]";

const App = () => {
  return (
    <div
      lang="zh-CN"
      className="relative h-screen flex flex-col overflow-hidden border-t border-l border-black bg-white font-['Noto_Sans','Noto_Sans_CJK_SC',sans-serif]"
    >
      <TitleBar />
      <div className="flex-1 min-h-0 flex">
        <main className="flex-1 min-w-0 pl-[25px] pr-[26px] overflow-hidden">
          <p className="flex items-center h-4 text-[12px] leading-4 text-[#808080]">
            <span>类别<Mark>：</Mark>[GBQ4.0]</span>
            <span className={`ml-3.5 ${cjk}`}>|</span>
            <span className="ml-[3px]">地区<Mark>：</Mark>全国</span>
            <span className={`ml-2 ${cjk}`}>|</span>
            <span className="ml-3">浏览<Mark>：</Mark>179363次</span>
          </p>

          <section className="pb-[10px] border-b border-dashed border-[#d8d8d8]">
            <h2 className={`mt-[11px] ${heading}`}>关键字<Mark>：</Mark></h2>
            <p className={`mt-[10px] pb-px text-[14px] leading-5 ${cjk}`}>全费用|完全取费|都取费|包含规费税金|包含其他费用</p>
          </section>

          <section className="mt-5 pb-[10px] border-b border-dashed border-[#d8d8d8]">
            <h2 className={heading}>问题描述<Mark>：</Mark></h2>
            <p className={`mt-[10px] pb-px text-[14px] leading-5 ${cjk}`}>全费用综合单价模板如何设置以及使用<Mark>？</Mark></p>
          </section>

          <section className="mt-5">
            <h2 className={heading}>解决方案<Mark>：</Mark></h2>
            <div className={`mt-[10px] pb-px text-[14px] leading-[21px] ${cjk}`}>
              <p>
                解决方案一<Mark>：</Mark>部分地区新建单位工程的时候，软件设置了“模板类别”，在里面选择全费用模板即可。还有一些地区新建单位工程点击“按模板新建”里面就有对应的全费用模板直接选择相应专业确定即可。
              </p>
              <p>
                解决方案二<Mark>：</Mark>部分地区的软件已经做好了全费用单价的模板，需要在分部分项、费用汇总界面分别载入，具体步骤如下<Mark>：</Mark>
              </p>
              <p className="text-[12px] leading-[18px]">
                步骤一<Mark>：</Mark>在分部分项界面，工具栏找到‘单价构成’功能键，点开单价构成在弹出来的管理取费文件对话框里，在费用项目里单击右键--插入空行，给出费用名称代号、基数、费率等信息后将费用代号加入综合单价即可，如果该地区有内置全费用模板可以在单价构成-载入模板中载入全费用综合单价模板。
              </p>
            </div>
            <SoftwareWindow />
          </section>
          <Feedback />
        </main>
        <Scrollbar />
      </div>
      <DarkSpeedBall />
      <GreenSpeedBall />
    </div>
  );
};

export default App;
